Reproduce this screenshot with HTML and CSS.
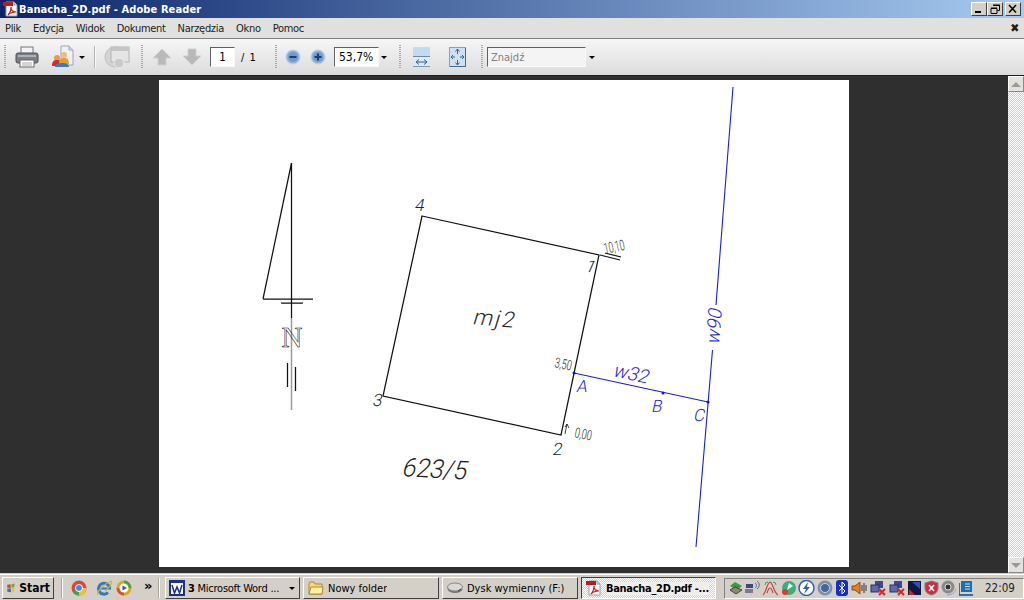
FILE: index.html
```html
<!DOCTYPE html>
<html lang="pl">
<head>
<meta charset="utf-8">
<title>Banacha_2D.pdf - Adobe Reader</title>
<link rel="stylesheet" href="styles.css">
</head>
<body>
<svg class="defs" width="0" height="0" aria-hidden="true">
  <symbol id="pdf" viewBox="0 0 16 16">
    <path d="M3 1h8l3 3v11H3z" fill="#fff" stroke="#9a9a9a"/>
    <path d="M11 1v3h3" fill="#ddd" stroke="#9a9a9a"/>
    <rect x="0" y="1" width="10" height="4" fill="#c01820"/>
    <path d="M5 14c2-2 3-5 3-8 0 3 2 5 5 5-3 0-6 1-8 3z" fill="none" stroke="#d01820" stroke-width="1.2"/>
  </symbol>
</svg>

<div class="window">
  <header class="titlebar">
    <svg class="ico16"><use href="#pdf"/></svg>
    <span class="title">Banacha_2D.pdf - Adobe Reader</span>
    <div class="winbtns">
      <button class="wbtn"><svg width="14" height="12"><rect x="3" y="8" width="6" height="2" fill="#000"/></svg></button>
      <button class="wbtn"><svg width="14" height="12"><path d="M5.500 2.500h6v5h-2M3 5.500h6v5H3z" fill="none" stroke="#000"/><path d="M5 2h7M3 5h6" stroke="#000"/></svg></button>
      <button class="wbtn wbtn-close"><svg width="14" height="12"><path d="M3 2l7 7.500M10 2l-7 7.500" stroke="#000" stroke-width="1.500"/></svg></button>
    </div>
  </header>

  <nav class="menubar">
    <span class="mi">Plik</span><span class="mi">Edycja</span><span class="mi">Widok</span><span class="mi">Dokument</span><span class="mi">Narzędzia</span><span class="mi">Okno</span><span class="mi">Pomoc</span>
    <span class="menu-close">✖</span>
  </nav>

  <div class="toolbar">
    <i class="grip g-first"></i>
    <svg class="tb tb-print" width="24" height="22" viewBox="0 0 24 22">
      <rect x="6" y="1" width="12" height="7" fill="#f4f4f4" stroke="#777"/>
      <rect x="1" y="7" width="22" height="10" rx="2" fill="#7d8186" stroke="#4c4f53"/>
      <rect x="3" y="9" width="18" height="2" fill="#aeb2b6"/>
      <rect x="5" y="14" width="14" height="7" fill="#fff" stroke="#666"/>
      <path d="M7 17h10M7 19h10" stroke="#aaa"/>
    </svg>
    <svg class="tb tb-share" width="24" height="24" viewBox="0 0 24 24">
      <path d="M10 1h8l4 4v15H10z" fill="#eef2f8" stroke="#9aa6b8"/>
      <path d="M18 1v4h4" fill="#cfd8e6" stroke="#9aa6b8"/>
      <circle cx="6" cy="13" r="3" fill="#e89a4a"/>
      <path d="M1 21c0-5 2-6 5-6s5 1 5 6z" fill="#d02c2c"/>
      <circle cx="13" cy="10" r="3" fill="#eebc78"/>
      <path d="M8 19c0-5 2-6 5-6s5 1 5 6z" fill="#e6a020"/>
      <path d="M4 22c0-3 3-4 7-4s7 1 7 4z" fill="#3b78c8"/>
    </svg>
    <i class="caret c-share"></i>
    <i class="sep"></i>
    <svg class="tb tb-globe" width="26" height="24" viewBox="0 0 26 24">
      <circle cx="11" cy="12" r="10" fill="#d4d4d4" stroke="#c0c0c0"/>
      <rect x="7" y="2" width="18" height="15" fill="#e4e4e4" stroke="#b4b4b4"/>
      <rect x="7" y="2" width="18" height="4" fill="#c4c4c4"/>
      <circle cx="15" cy="18" r="5" fill="#cacaca" stroke="#eee"/>
    </svg>
    <i class="grip g-nav"></i>
    <svg class="tb tb-up" width="20" height="18" viewBox="0 0 20 18"><path d="M10 1l9 9h-5v7H6v-7H1z" fill="#b9b9b9" stroke="#d0d0d0"/></svg>
    <svg class="tb tb-down" width="20" height="18" viewBox="0 0 20 18"><path d="M10 17l9-9h-5V1H6v7H1z" fill="#b9b9b9" stroke="#d0d0d0"/></svg>
    <span class="field f-page">1</span>
    <span class="pages">/ 1</span>
    <i class="grip g-zoom"></i>
    <svg class="tb tb-zout" width="16" height="16" viewBox="0 0 16 16"><circle cx="8" cy="8" r="7" fill="#8fb4da" stroke="#bcd2e8"/><circle cx="8" cy="8" r="5" fill="#6f9bcc"/><rect x="4.500" y="7" width="7" height="2" fill="#1c3f74"/></svg>
    <svg class="tb tb-zin" width="16" height="16" viewBox="0 0 16 16"><circle cx="8" cy="8" r="7" fill="#8fb4da" stroke="#bcd2e8"/><circle cx="8" cy="8" r="5" fill="#6f9bcc"/><path d="M4.500 8h7M8 4.500v7" stroke="#1c3f74" stroke-width="2"/></svg>
    <span class="field f-zoom">53,7%</span>
    <i class="caret c-zoom"></i>
    <i class="grip g-fit"></i>
    <svg class="tb tb-fitw" width="17" height="20" viewBox="0 0 17 20">
      <rect x="0" y="0" width="17" height="9" rx="1" fill="#c4daf0"/>
      <rect x="0" y="9" width="17" height="1" fill="#6a8aa8"/>
      <rect x="0" y="11" width="17" height="9" fill="#dce8f4"/>
      <rect x="0" y="19" width="17" height="1" fill="#7a9ab8"/>
      <path d="M3 15h11M3 15l3-2.500M3 15l3 2.500M14 15l-3-2.500M14 15l-3 2.500" stroke="#34608c" fill="none"/>
    </svg>
    <svg class="tb tb-fitp" width="17" height="20" viewBox="0 0 17 20">
      <rect x=".5" y=".5" width="16" height="19" fill="#cfe0f0" stroke="#7ea4c4"/>
      <path d="M1 19.500h15.500V1" fill="none" stroke="#3c6c96"/>
      <path d="M8.500 2v5M8.500 2l-2 2.500M8.500 2l2 2.500M8.500 18v-5M8.500 18l-2-2.500M8.500 18l2-2.500M2 10h4M2 10l2-2M2 10l2 2M15 10h-4M15 10l-2-2M15 10l-2 2" stroke="#2d6a9c" fill="none"/>
    </svg>
    <i class="grip g-find"></i>
    <span class="field f-find">Znajdź</span>
    <i class="caret c-find"></i>
  </div>

  <main class="workspace">
    <div class="viewer">
      <div class="page">
        <svg class="drawing" width="690" height="487" viewBox="159 80 690 487">
          <g class="ink">
            <path d="M291.500 163V318M263 299L291.500 163M263 299H313M281 303H303"/>
            <path class="grey" d="M291.500 318V410"/>
            <path d="M287.500 363V387M295.500 367V391" />
            <path d="M422 216L599 255L561 435L383 396Z"/>
            <path d="M605 253L621 257M600 255L620 260"/>
            <path class="thin" d="M565 434L567 424M565 427L567 424L569 428"/>
          </g>
          <g class="blue">
            <path d="M574 373L708 402"/>
            <path d="M733 87L716 305M712.500 350L696 547"/>
            <circle cx="574" cy="373" r="1.500"/>
            <circle cx="663" cy="393" r="1.500"/>
            <circle cx="708" cy="402" r="1.500"/>
          </g>
          <text class="north" x="292" y="347">N</text>
          <text class="cad" font-size="17" transform="translate(414 211) skewX(-12)">4</text>
          <text class="cad" font-size="17" transform="translate(584 271) rotate(12) skewX(-12)">1</text>
          <text class="cad" font-size="17" transform="translate(372 406) skewX(-12)">3</text>
          <text class="cad" font-size="17" transform="translate(552 455) skewX(-12)">2</text>
          <text class="cad" font-size="22" transform="translate(472 324) rotate(5) skewX(-12)" letter-spacing="2">mj2</text>
          <text class="cad" font-size="26" transform="translate(401 476) rotate(3) skewX(-12) scale(.95 1)">623/5</text>
          <text class="cad" font-size="14" transform="translate(554 367) rotate(12) scale(.66 1)">3,50</text>
          <text class="cad" font-size="14" transform="translate(574 437) rotate(12) scale(.66 1)">0,00</text>
          <text class="cad" font-size="15" transform="translate(605 254) rotate(-12) scale(.58 1)">10,10</text>
          <g class="cad-blue">
            <text font-size="17" transform="translate(576 392) skewX(-12)">A</text>
            <text font-size="17" transform="translate(651 412) skewX(-12)">B</text>
            <text font-size="17" transform="translate(693 421) skewX(-12)">C</text>
            <text font-size="19" transform="translate(612 376) rotate(12) skewX(-12)">w32</text>
            <text font-size="19" transform="translate(719 345) rotate(-85.400) skewX(-12)">w90</text>
          </g>
        </svg>
      </div>
    </div>
    <aside class="scrollbar">
      <span class="sbtn"><svg width="14" height="14"><path d="M2 10L7 5L12 10Z" fill="#9a9a9a"/></svg></span>
      <span class="strack"></span>
      <span class="sbtn"><svg width="14" height="14"><path d="M2 5L7 10L12 5Z" fill="#9a9a9a"/></svg></span>
    </aside>
  </main>

  <footer class="taskbar">
    <button class="start">
      <svg width="16" height="16" viewBox="0 0 16 16"><path d="M2 3l5-1 .5 5.500L2 8z" fill="#d8452a"/><path d="M8.500 2l5-1-.5 6-4.500.5z" fill="#6cb030"/><path d="M2 9l5.500-.5.5 6L2 14z" fill="#3a70c8"/><path d="M9 8.500l4-.5-.5 6-3.500 1z" fill="#f2c020"/></svg>
      Start
    </button>
    <i class="tsep s-first"></i>
    <svg class="ql ql-chrome" width="16" height="16" viewBox="0 0 16 16"><circle cx="8" cy="8" r="7.500" fill="#d84a38"/><path d="M8 8L1.500 11.800A7.500 7.500 0 0 0 8 15.500L11.500 9z" fill="#3aa655"/><path d="M8 8h7.300A7.500 7.500 0 0 1 8 15.500z" fill="#f2c230"/><circle cx="8" cy="8" r="3.500" fill="#4a82e0" stroke="#fff"/></svg>
    <svg class="ql ql-ie" width="17" height="17" viewBox="0 0 17 17"><path d="M13.500 9.500A5.500 5.500 0 1 0 12 12.500" fill="none" stroke="#2a7ac8" stroke-width="3"/><path d="M4 8.500h9" stroke="#2a7ac8" stroke-width="2"/><path d="M2 15C0 12 8 4 15 1c2 2-2 7-6 10" fill="none" stroke="#e0b020" stroke-width="1.200"/></svg>
    <svg class="ql ql-wmp" width="16" height="16" viewBox="0 0 16 16"><circle cx="8" cy="8" r="7.500" fill="#e8a020"/><path d="M8 .5A7.500 7.500 0 0 1 15.500 8H8z" fill="#4aa040"/><path d="M8 15.500A7.500 7.500 0 0 1 .5 8H8z" fill="#d85030"/><circle cx="8" cy="8" r="4.500" fill="#fff"/><path d="M6.500 5.500L11 8l-4.500 2.500z" fill="#2a5ab0"/></svg>
    <span class="chev">»</span>
    <i class="tsep s-second"></i>
    <div class="tasks">
      <button class="task t-word">
        <svg width="16" height="16" viewBox="0 0 16 16"><rect width="16" height="16" fill="#1c2f94"/><rect x="2" y="3" width="12" height="11" fill="#fff"/><path d="M3 5l2.500 8L8 7l2.500 6L13 5" fill="none" stroke="#1c2f94" stroke-width="1.500"/></svg>
        <span class="tlabel"><b>3</b> Microsoft Word ...</span>
        <i class="caret c-task"></i>
      </button>
      <button class="task t-folder">
        <svg width="16" height="14" viewBox="0 0 16 14"><path d="M1 3l1-2h4l1 2h7v10H1z" fill="#f5d878" stroke="#a88a30"/><path d="M1 13l2-7h12l-1 7z" fill="#fff0a8" stroke="#a88a30"/></svg>
        <span class="tlabel">Nowy folder</span>
      </button>
      <button class="task t-disk">
        <svg width="16" height="12" viewBox="0 0 16 12"><ellipse cx="8" cy="7" rx="7.500" ry="4" fill="#777"/><ellipse cx="8" cy="5" rx="7.500" ry="4" fill="#d8d8d8" stroke="#888"/><path d="M11 9l3-2" stroke="#3c3c3c"/></svg>
        <span class="tlabel">Dysk wymienny (F:)</span>
      </button>
      <button class="task t-active">
        <svg class="ico16"><use href="#pdf"/></svg>
        <span class="tlabel">Banacha_2D.pdf -...</span>
      </button>
    </div>
    <div class="tray">
      <svg class="ti" width="14" height="16" viewBox="0 0 14 16"><path d="M1 6l5-4 7 4-5 4z" fill="#3c9a3c"/><path d="M1 10l5-3 7 3-6 4z" fill="#8a8a78" stroke="#444"/></svg>
      <svg class="ti" width="15" height="16" viewBox="0 0 15 16"><rect x="1" y="4" width="7" height="4" fill="#3a4a80"/><rect x="0" y="9" width="8" height="4" fill="#7a7a90"/><path d="M10 3c2 1 2 4 0 5M12 1c3 2 3 6 0 8" fill="none" stroke="#5a6a90"/></svg>
      <svg class="ti" width="17" height="16" viewBox="0 0 17 16"><path d="M1 15C4 13 5 3 8 2c3 1 4 11 8 13M5 13C6 10 7 8 8 8s2 2 3 5" fill="none" stroke="#c84040" stroke-width="1.200"/><path d="M3 5a3 3 0 0 1 3-3M14 5a3 3 0 0 0-3-3" fill="none" stroke="#3a9a50"/></svg>
      <svg class="ti" width="15" height="16" viewBox="0 0 15 16"><circle cx="8" cy="8" r="7" fill="#38b078"/><circle cx="4" cy="12" r="3" fill="#e03838"/><path d="M8 3l4 3-6 4z" fill="#fff"/></svg>
      <svg class="ti" width="17" height="16" viewBox="0 0 17 16"><circle cx="8.500" cy="8" r="7.500" fill="#fff" stroke="#2a62b0" stroke-width="1.500"/><path d="M10 2L5 9h3l-2 5 6-7H9z" fill="#2a62b0"/></svg>
      <svg class="ti" width="16" height="16" viewBox="0 0 16 16"><circle cx="8" cy="8" r="7.500" fill="#8090a8"/><circle cx="8" cy="8" r="4.500" fill="#3c6aa0" stroke="#c8d0dc"/></svg>
      <svg class="ti" width="14" height="16" viewBox="0 0 14 16"><rect x="1" width="12" height="16" rx="3" fill="#1430c0"/><path d="M4 5l6 6-3 3V2l3 3-6 6" fill="none" stroke="#fff"/></svg>
      <svg class="ti" width="17" height="16" viewBox="0 0 17 16"><path d="M1 6h3l5-4v12l-5-4H1z" fill="#e0802c" stroke="#8a4a1c"/><path d="M11 5v6M13 3v10M15 5v6" stroke="#333"/></svg>
      <svg class="ti" width="17" height="16" viewBox="0 0 17 16"><rect x="5" y="1" width="8" height="7" fill="#3a4a90"/><rect x="1" y="5" width="8" height="7" fill="#5a6ab0" stroke="#2a3060"/><path d="M9 9l6 6M15 9l-6 6" stroke="#e02020" stroke-width="2"/></svg>
      <svg class="ti" width="17" height="16" viewBox="0 0 17 16"><rect x="5" y="1" width="8" height="7" fill="#3a4a90"/><rect x="1" y="5" width="8" height="7" fill="#5a6ab0" stroke="#2a3060"/><path d="M9 9l6 6M15 9l-6 6" stroke="#e02020" stroke-width="2"/></svg>
      <svg class="ti" width="14" height="16" viewBox="0 0 14 16"><rect y="1" width="13" height="14" fill="#101840"/><path d="M4 2h8v7z" fill="#2a50d0"/><path d="M1 9l6 6H1z" fill="#d02020"/></svg>
      <svg class="ti" width="15" height="16" viewBox="0 0 15 16"><path d="M7.500 1l6.500 2v5c0 4-3 6-6.500 7C4 14 1 12 1 8V3z" fill="#c83040" stroke="#7a8090"/><path d="M5 5l5 6M10 5l-5 6" stroke="#fff" stroke-width="1.500"/></svg>
      <svg class="ti" width="16" height="16" viewBox="0 0 16 16"><circle cx="7" cy="7" r="6.500" fill="#8a8a8a"/><circle cx="7" cy="7" r="3" fill="#333" stroke="#ddd"/><path d="M6 15c4 0 8-2 9-6" fill="none" stroke="#8a9ad8"/></svg>
      <svg class="ti" width="16" height="16" viewBox="0 0 16 16"><path d="M2 1h11v11H2z" fill="#1a70b8"/><path d="M0 3v12h14" fill="none" stroke="#0a4a90" stroke-width="1.500"/><path d="M6 4h5M6 6.500h5M6 9h5" stroke="#bfe0f4"/></svg>
      <span class="clock">22:09</span>
    </div>
  </footer>
</div>
</body>
</html>
```
FILE: styles.css
```css
* { box-sizing: border-box; }
html, body { margin: 0; height: 100%; overflow: hidden; }
body { font-family: "DejaVu Sans", "Liberation Sans", sans-serif; font-size: 11px; color: #000; }
.defs { display: block; height: 0; }
.window { width: 1024px; height: 600px; display: flex; flex-direction: column; overflow: hidden; }
.ico16 { width: 16px; height: 16px; flex: none; }
i { display: block; flex: none; }

/* title bar */
.titlebar { height: 18px; flex: none; display: flex; align-items: center; padding: 0 3px 0 3px; background: linear-gradient(90deg, #0a246a 0%, #a6caf0 100%); }
.title { color: #fff; font-weight: bold; font-size: 11px; font-stretch: condensed; letter-spacing: .1px; white-space: nowrap; }
.winbtns { margin-left: auto; display: flex; }
.wbtn { width: 16px; height: 14px; padding: 0; border: 1px solid; border-color: #fff #404040 #404040 #fff; background: #d4d0c8; display: flex; align-items: center; justify-content: center; }
.wbtn-close { margin-left: 2px; }

/* menu */
.menubar { height: 21px; flex: none; display: flex; align-items: center; padding: 0 5px; gap: 12px; background: #e0e0de; border-bottom: 1px solid #808080; font-family: "DejaVu Sans Condensed", "DejaVu Sans", sans-serif; font-stretch: condensed; font-size: 11px; letter-spacing: -.3px; color: #1c1c1c; }
.menu-close { margin-left: auto; font-size: 12px; }

/* toolbar */
.toolbar { height: 36px; flex: none; display: flex; align-items: center; background: linear-gradient(#f6f6f6, #dcdcdc); }
.tb { flex: none; display: block; }
.grip { width: 2px; height: 24px; background-image: repeating-linear-gradient(#a8a8a8 0 1px, transparent 1px 2px); }
.g-first { margin-left: 4px; }
.tb-print { margin-left: 9px; }
.tb-share { margin-left: 12px; }
.caret { width: 0; height: 0; border: 3px solid transparent; border-top: 3px solid #000; border-bottom: 0; }
.c-share { margin-left: 4px; }
.sep { width: 1px; height: 22px; margin-left: 9px; background: #b4b4b4; box-shadow: 1px 0 #fafafa; }
.tb-globe { margin-left: 9px; }
.g-nav { margin-left: 11px; }
.tb-up { margin-left: 9px; }
.tb-down { margin-left: 10px; }
.field { flex: none; height: 20px; display: flex; align-items: center; background: #fff; border: 1px solid; border-color: #606060 #fafafa #fafafa #606060; font-family: "DejaVu Sans Condensed", "DejaVu Sans", sans-serif; font-stretch: condensed; font-size: 11.500px; }
.f-page { width: 25px; margin-left: 8px; justify-content: center; }
.pages { margin-left: 6px; width: 16px; font-stretch: condensed; word-spacing: 2px; white-space: nowrap; }
.g-zoom { margin-left: 18px; }
.tb-zout { margin-left: 8px; }
.tb-zin { margin-left: 9px; }
.f-zoom { width: 45px; margin-left: 8px; padding-left: 4px; font-size: 12px; }
.c-zoom { margin-left: 2px; }
.g-fit { margin-left: 12px; }
.tb-fitw { margin-left: 12px; }
.tb-fitp { margin-left: 19px; }
.g-find { margin-left: 15px; }
.f-find { width: 99px; margin-left: 4px; padding-left: 3px; background: #f4f4f4; color: #808080; font-size: 11px; }
.c-find { margin-left: 3px; }

/* workspace */
.workspace { flex: 1; min-height: 0; display: flex; background: #2f2f2f; border-top: 1px solid #1c1c1c; }
.viewer { flex: 1; padding: 4px 0 0 159px; }
.page { width: 690px; height: 487px; background: #fff; }
.drawing { display: block; }
.ink { fill: none; stroke: #111; stroke-width: 1.250; }
.ink .grey { stroke: #9a9a9a; stroke-width: 1.500; }
.ink .thin { stroke-width: .8; }
.blue { fill: #1414d0; stroke: none; }
.blue path { fill: none; stroke: #1c1cd8; stroke-width: 1.100; }
.north { font-family: "Liberation Serif", serif; font-size: 29px; text-anchor: middle; fill: none; stroke: #000; stroke-width: .5; }
.cad { font-family: Roboto, "Liberation Sans", sans-serif; font-weight: 300; fill: #222; }
.cad-blue text { font-family: Roboto, "Liberation Sans", sans-serif; font-weight: 300; fill: #1c1cd8; }
.scrollbar { width: 16px; flex: none; display: flex; flex-direction: column; }
.sbtn { height: 16px; flex: none; background: #e4e2dc; border: 1px solid; border-color: #fff #8a8a8a #8a8a8a #fff; display: flex; align-items: center; justify-content: center; }
.strack { flex: 1; background: repeating-conic-gradient(#d4d0c8 0 25%, #fff 0 50%) 0 0 / 2px 2px; }

/* task bar */
.taskbar { height: 27px; flex: none; display: flex; align-items: center; padding: 2px 0 0 2px; background: #d4d0c8; border-top: 1px solid #d4d0c8; box-shadow: inset 0 1px #fff; }
.start, .task { height: 22px; padding: 0 4px; display: flex; align-items: center; background: #d4d0c8; border: 1px solid; border-color: #fff #404040 #404040 #fff; font-family: "DejaVu Sans Condensed", "DejaVu Sans", sans-serif; font-stretch: condensed; font-size: 11px; color: #000; white-space: nowrap; }
.start { width: 52px; gap: 3px; padding: 0 3px; font-weight: bold; font-size: 12px; }
.tsep { width: 2px; height: 20px; background: #a8a49c; border-right: 1px solid #fff; }
.s-first { margin-left: 7px; }
.ql { flex: none; }
.ql-chrome { margin-left: 8px; }
.ql-ie { margin-left: 9px; }
.ql-wmp { margin-left: 3px; }
.chev { margin-left: 12px; width: 10px; font-size: 13px; font-weight: bold; margin-top: -6px; }
.s-second { margin-left: 4px; }
.tasks { display: flex; gap: 3px; margin-left: 5px; }
.task { gap: 4px; }
.tlabel { overflow: hidden; }
.t-word { width: 135px; padding: 0 3px; gap: 3px; letter-spacing: -.25px; }
.c-task { margin-left: auto; margin-right: 1px; }
.t-folder { width: 136px; }
.t-disk { width: 136px; }
.t-active { width: 135px; border-color: #404040 #fff #fff #404040; background: repeating-conic-gradient(#d4d0c8 0 25%, #fff 0 50%) 0 0 / 2px 2px; font-weight: bold; letter-spacing: -.3px; }
.t-active .tlabel { background: #f0eeea; }
.tray { margin-left: 8px; flex: 1; height: 21px; display: flex; align-items: center; gap: 2px; padding-left: 4px; border: 1px solid; border-color: #808080 #fff #fff #808080; }
.ti { flex: none; }
.clock { margin-left: 8px; font-family: "DejaVu Sans Condensed", "DejaVu Sans", sans-serif; font-stretch: condensed; font-size: 11.500px; color: #222; }
```
